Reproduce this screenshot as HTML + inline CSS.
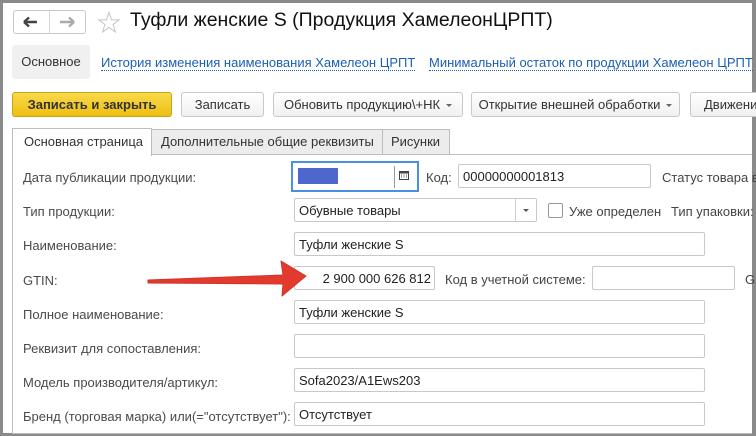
<!DOCTYPE html>
<html><head><meta charset="utf-8"><style>
*{box-sizing:border-box;margin:0;padding:0}
body{width:756px;height:436px;overflow:hidden;background:#fff;font-family:"Liberation Sans",Arial,sans-serif;font-size:13px;color:#333;position:relative}
.a{position:absolute;white-space:nowrap}
.frame{position:absolute;left:0;top:0;width:756px;height:436px;border:3px solid #8a8a8a;border-right-width:4px;border-bottom-width:3px}
.btn{position:absolute;height:25px;border:1px solid #c8c8c8;border-radius:3px;background:linear-gradient(#fff,#f0f0f0);line-height:23px;text-align:center;color:#333}
.inp{position:absolute;height:24px;border:1px solid #c8c8c8;border-radius:2px;background:#fff;line-height:24px;padding-left:4px;color:#222}
.lbl{position:absolute;left:23px;color:#4a4a4a}
.link{color:#1a5fb4;border-bottom:1px dotted #1a5fb4;line-height:15px}
.caret{display:inline-block;width:0;height:0;border-left:3px solid transparent;border-right:3px solid transparent;border-top:3px solid #666;vertical-align:middle;margin-left:6px}
</style></head><body>
<div class="frame"></div>
<div class="a" style="left:13px;top:10px;width:73px;height:24px;border:1px solid #c8c8c8;border-radius:3px;background:#fff"></div>
<div class="a" style="left:49px;top:11px;width:1px;height:22px;background:#d8d8d8"></div>
<svg class="a" style="left:23px;top:16px" width="16" height="12"><path d="M1 6h13M1 6l5-4.5M1 6l5 4.5" stroke="#444" stroke-width="2.4" fill="none"/></svg>
<svg class="a" style="left:59px;top:16px" width="16" height="12"><path d="M1 6h13M15 6l-5-4.5M15 6l-5 4.5" stroke="#aaa" stroke-width="2.4" fill="none"/></svg>
<svg class="a" style="left:97px;top:11px" width="24" height="22"><path d="M12 1.5l2.6 7.4h7.6l-6.1 4.6 2.3 7.5-6.4-4.6-6.4 4.6 2.3-7.5L1.8 8.9h7.6z" fill="none" stroke="#c4c4c4" stroke-width="1"/></svg>
<div class="a" style="left:130px;top:9px;font-size:19.5px;color:#111">Туфли женские S (Продукция ХамелеонЦРПТ)</div>
<div class="a" style="left:12px;top:45px;width:78px;height:34px;background:#f0f0f0;border-radius:3px;line-height:34px;text-align:center;color:#333">Основное</div>
<div class="a link" style="left:101px;top:55px">История изменения наименования Хамелеон ЦРПТ</div>
<div class="a link" style="left:429px;top:55px">Минимальный остаток по продукции Хамелеон ЦРПТ</div>
<div class="btn" style="left:12px;top:92px;width:160px;background:linear-gradient(#f9d94a,#eebf12);border-color:#c9a418;font-weight:bold;color:#333">Записать и закрыть</div>
<div class="btn" style="left:181px;top:92px;width:83px">Записать</div>
<div class="btn" style="left:273px;top:92px;width:190px">Обновить продукцию\+НК<span class="caret"></span></div>
<div class="btn" style="left:471px;top:92px;width:209px">Открытие внешней обработки<span class="caret"></span></div>
<div class="btn" style="left:690px;top:92px;width:80px;text-align:left;padding-left:13px">Движения</div>
<div class="a" style="left:12px;top:154px;width:740px;height:1px;background:#bdbdbd"></div>
<div class="a" style="left:12px;top:154px;width:1px;height:280px;background:#bdbdbd"></div>
<div class="a" style="left:151px;top:129px;width:232px;height:26px;border:1px solid #bdbdbd;background:#ececec;line-height:24px;padding-left:9px;color:#333">Дополнительные общие реквизиты</div>
<div class="a" style="left:383px;top:129px;width:67px;height:26px;border:1px solid #bdbdbd;border-left:none;background:#ececec;line-height:24px;padding-left:8px;color:#333">Рисунки</div>
<div class="a" style="left:12px;top:128px;width:140px;height:28px;border:1px solid #bdbdbd;border-bottom:none;background:#fff;line-height:26px;padding-left:11px;color:#333">Основная страница</div>
<div class="a" style="left:12px;top:433px;width:740px;height:1px;background:#bdbdbd"></div>

<div class="lbl" style="top:170px">Дата публикации продукции:</div>
<div class="a" style="left:291px;top:161px;width:128px;height:31px;border:2px solid #4a90e2;background:#fff"></div>
<div class="a" style="left:298px;top:168px;width:40px;height:16px;background:#4f67cc"></div>
<div class="a" style="left:394px;top:166px;width:1px;height:22px;background:#999"></div>
<svg class="a" style="left:399px;top:170px" width="10" height="10"><rect x="0.5" y="1.5" width="9" height="8" fill="none" stroke="#444"/><rect x="0" y="1" width="10" height="2.5" fill="#444"/><path d="M2 5h1M4.5 5h1M7 5h1M2 7h1M4.5 7h1M7 7h1" stroke="#444"/></svg>
<div class="a" style="left:426px;top:170px;color:#444">Код:</div>
<div class="inp" style="left:458px;top:164px;width:193px">00000000001813</div>
<div class="a" style="left:662px;top:170px;color:#444">Статус товара в</div>

<div class="lbl" style="top:204px">Тип продукции:</div>
<div class="inp" style="left:294px;top:198px;width:243px">Обувные товары</div>
<div class="a" style="left:515px;top:199px;width:1px;height:22px;background:#ccc"></div>
<div class="a" style="left:523px;top:209px;border-left:3px solid transparent;border-right:3px solid transparent;border-top:3px solid #555"></div>
<div class="a" style="left:548px;top:203px;width:15px;height:15px;border:1px solid #999;border-radius:2px;background:#fff"></div>
<div class="a" style="left:569px;top:204px;color:#444">Уже определен</div>
<div class="a" style="left:671px;top:204px;color:#444">Тип упаковки:</div>

<div class="lbl" style="top:238px">Наименование:</div>
<div class="inp" style="left:294px;top:232px;width:411px">Туфли женские S</div>

<div class="lbl" style="top:273px">GTIN:</div>
<div class="inp" style="left:294px;top:266px;width:141px;text-align:right;padding-right:3px">2 900 000 626 812</div>
<div class="a" style="left:445px;top:272px;color:#444">Код в учетной системе:</div>
<div class="inp" style="left:592px;top:266px;width:143px"></div>
<div class="a" style="left:745px;top:272px;color:#444">G</div>

<div class="lbl" style="top:307px">Полное наименование:</div>
<div class="inp" style="left:294px;top:300px;width:411px">Туфли женские S</div>

<div class="lbl" style="top:341px">Реквизит для сопоставления:</div>
<div class="inp" style="left:294px;top:334px;width:411px"></div>

<div class="lbl" style="top:375px">Модель производителя/артикул:</div>
<div class="inp" style="left:294px;top:368px;width:411px">Sofa2023/A1Ews203</div>

<div class="lbl" style="top:409px">Бренд (торговая марка) или(="отсутствует"):</div>
<div class="inp" style="left:294px;top:402px;width:411px">Отсутствует</div>

<svg class="a" style="left:140px;top:255px" width="175" height="45"><path d="M8 25 L143 20 L141 6 L166 21 L142 41 L143 29 L8 28 Z" fill="#e23b2e" stroke="#d0332a" stroke-width="1" stroke-linejoin="round"/></svg>
</body></html>
